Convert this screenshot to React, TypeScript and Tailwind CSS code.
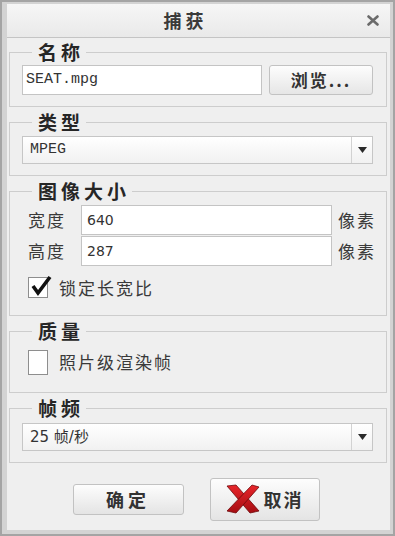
import React from 'react'

const cjk = '"Noto Sans CJK SC", "Noto Sans", sans-serif'
const mono = '"Liberation Mono", "Noto Sans CJK SC", monospace'
const sans = '"DejaVu Sans", "Noto Sans CJK SC", sans-serif'

function Group({ title, children, className }: { title: string; children: React.ReactNode; className?: string }) {
  return (
    <fieldset className="border border-[#cdcdcd] p-0">
      <legend
        className="ml-[22px] pl-[6px] pr-[2px] text-[19px] font-bold leading-[20px] tracking-[4px] text-[#262626]"
        style={{ fontFamily: cjk }}
      >
        {title}
      </legend>
      <div className={className}>{children}</div>
    </fieldset>
  )
}

function Select({ value, font }: { value: string; font: string }) {
  return (
    <div className="flex h-[28px] border border-[#c6c6c6] bg-gradient-to-b from-white to-[#f1f1f1]">
      <div
        className="flex flex-1 items-center pl-[7px] text-[15px] text-[#333]"
        style={{ fontFamily: font }}
      >
        {value}
      </div>
      <div className="flex w-[21px] items-center justify-center border-l border-[#d2d2d2]">
        <svg width="9" height="6" viewBox="0 0 9 6">
          <polygon points="0,0 9,0 4.5,6" fill="#2a2a2a" />
        </svg>
      </div>
    </div>
  )
}

function SizeRow({ label, value }: { label: string; value: string }) {
  return (
    <div className="flex h-[30px] items-center">
      <span className="w-[53px] whitespace-nowrap text-[17px] tracking-[2px] text-[#3a3a3a]" style={{ fontFamily: cjk }}>
        {label}
      </span>
      <div
        className="flex h-[30px] w-[251px] items-center border border-[#c4c4c4] bg-white pl-[5px] text-[14px] text-[#333]"
        style={{ fontFamily: sans }}
      >
        {value}
      </div>
      <span className="ml-[6px] whitespace-nowrap text-[17px] tracking-[2px] text-[#3a3a3a]" style={{ fontFamily: cjk }}>
        像素
      </span>
    </div>
  )
}

export default function App() {
  return (
    <div className="flex h-[536px] w-[395px] flex-col border-2 border-[#a4a4a4] bg-[#d3d3d3] pb-[4px] pl-[5px] pr-[3px] pt-[2px]">
      {/* Title bar */}
      <div className="flex h-[34px] shrink-0 items-center border-b border-[#c4c4c4] bg-gradient-to-b from-[#f6f6f6] to-[#e9e9e9]">
        <div
          className="flex-1 pl-[4px] text-center text-[18px] font-bold tracking-[4px] text-[#3a3a3a]"
          style={{ fontFamily: cjk }}
        >
          捕获
        </div>
        <div className="flex w-[30px] items-center justify-center pr-[4px]">
          <svg width="12" height="11" viewBox="0 0 12 11">
            <path d="M1.5 1.5 L10.5 9.5 M10.5 1.5 L1.5 9.5" stroke="#6b6b6b" strokeWidth="2.6" strokeLinecap="round" />
          </svg>
        </div>
      </div>

      {/* Body */}
      <div className="flex flex-1 flex-col gap-[5px] bg-[#efefef] pl-[2px] pr-[3px] pt-[4px]">
        <Group title="名称" className="pb-[11px] pl-[12px] pr-[13px] pt-[3px]">
          <div className="flex gap-[7px]">
            <div
              className="flex h-[30px] w-[240px] items-center border border-[#c4c4c4] bg-white pl-[3px] text-[15px] text-[#333]"
              style={{ fontFamily: mono }}
            >
              SEAT.mpg
            </div>
            <button className="flex h-[30px] flex-1 items-center justify-center rounded-[3px] border border-[#c2c2c2] bg-gradient-to-b from-[#fdfdfd] to-[#e6e6e6] text-[17px] font-bold tracking-[2px] text-[#333]" style={{ fontFamily: cjk }}>
              浏览...
            </button>
          </div>
        </Group>

        <Group title="类型" className="pb-[11px] pl-[12px] pr-[13px] pt-[4px]">
          <Select value="MPEG" font={mono} />
        </Group>

        <Group title="图像大小" className="pb-[17px] pl-[18px] pr-[6px] pt-[4px]">
          <SizeRow label="宽度" value="640" />
          <div className="mt-[1px]">
            <SizeRow label="高度" value="287" />
          </div>
          <div className="mt-[11px] flex h-[21px] items-center">
            <div className="relative h-[21px] w-[20px] border border-[#8e8e8e] bg-white">
              <svg className="absolute -top-[4px] left-[1px]" width="22" height="23" viewBox="0 0 22 23">
                <path d="M3 12 L8 19 L20 3" stroke="#111" strokeWidth="3.6" fill="none" strokeLinejoin="miter" />
              </svg>
            </div>
            <span className="ml-[11px] text-[17px] tracking-[2px] text-[#3a3a3a]" style={{ fontFamily: cjk }}>
              锁定长宽比
            </span>
          </div>
        </Group>

        <Group title="质量" className="pb-[17px] pl-[18px] pr-[13px] pt-[8px]">
          <div className="flex h-[26px] items-center">
            <div className="h-[25px] w-[20px] border border-[#8e8e8e] bg-white" />
            <span className="ml-[11px] text-[17px] tracking-[2px] text-[#3a3a3a]" style={{ fontFamily: cjk }}>
              照片级渲染帧
            </span>
          </div>
        </Group>

        <Group title="帧频" className="pb-[11px] pl-[12px] pr-[13px] pt-[5px]">
          <Select value="25 帧/秒" font={sans} />
        </Group>

        {/* Buttons */}
        <div className="flex flex-1 items-center justify-center gap-[26px] pr-[4px]">
          <button
            className="flex h-[31px] w-[111px] items-center justify-center rounded-[3px] border border-[#c2c2c2] bg-gradient-to-b from-[#fdfdfd] to-[#e4e4e4] text-[18px] font-bold tracking-[4px] text-[#333]"
            style={{ fontFamily: cjk }}
          >
            确定
          </button>
          <button
            className="flex h-[43px] w-[110px] items-center justify-center gap-[4px] rounded-[3px] border border-[#c2c2c2] bg-gradient-to-b from-[#fdfdfd] to-[#e4e4e4] text-[18px] font-bold tracking-[2px] text-[#333]"
            style={{ fontFamily: cjk }}
          >
            <svg width="34" height="30" viewBox="0 0 34 30">
              <defs>
                <linearGradient id="xr" x1="0" y1="0" x2="0" y2="1">
                  <stop offset="0" stopColor="#e8262b" />
                  <stop offset="1" stopColor="#a50d12" />
                </linearGradient>
              </defs>
              <polygon points="1,2 10,1 33,27 24,29" fill="url(#xr)" stroke="#6e0a0c" strokeWidth="0.8" />
              <polygon points="26,1 33,3 10,29 1,27" fill="url(#xr)" stroke="#6e0a0c" strokeWidth="0.8" />
            </svg>
            取消
          </button>
        </div>
      </div>
    </div>
  )
}
